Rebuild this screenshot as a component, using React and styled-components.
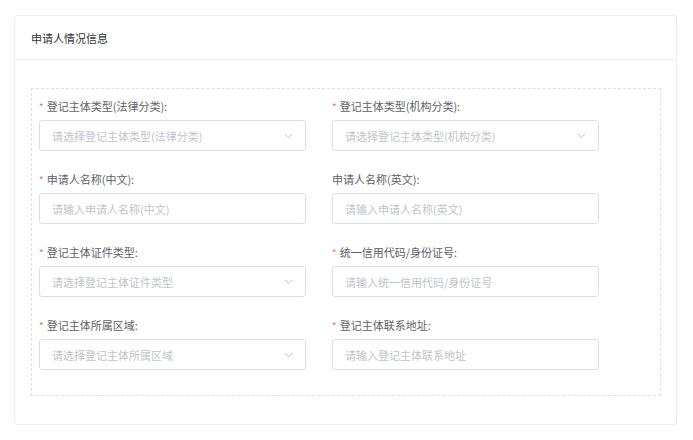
import React from 'react';
import styled, { createGlobalStyle } from 'styled-components';

const GlobalStyle = createGlobalStyle`
    body {
        margin: 0;
        background: #ffffff;
        font-family: "Noto Sans CJK SC", "Noto Sans", sans-serif;
    }
`;

const Page = styled.div`
    padding: 15px 16px 0 14px;
`;

const Card = styled.div`
    width: 663px;
    box-sizing: border-box;
    border: 1px solid #ebeef5;
    border-radius: 3px;
    background: #fff;
`;

const CardHeader = styled.div`
    height: 43px;
    display: flex;
    align-items: center;
    padding: 0 16px;
    border-bottom: 1px solid #ebeef5;
    font-size: 11px;
    color: #303133;
`;

const CardBody = styled.div`
    padding: 28px 15px 28px 16px;
`;

const DashedBox = styled.div`
    border: 1px dashed #dcdfe6;
    padding: 7px 7px 7px 7px;
    display: grid;
    grid-template-columns: 267px 267px;
    column-gap: 26px;
`;

const Field = styled.div`
    margin-bottom: 18px;
`;

const Label = styled.div`
    height: 20px;
    line-height: 20px;
    font-size: 11px;
    color: #606266;
    margin-bottom: 4px;
    white-space: nowrap;
    margin-left: ${p => (p.required ? '0' : '0')};
`;

const Star = styled.span`
    color: #f56c6c;
    margin-right: 3px;
    font-size: 10px;
`;

const InputBox = styled.div`
    height: 31px;
    box-sizing: border-box;
    border: 1px solid #dcdfe6;
    border-radius: 3px;
    display: flex;
    align-items: center;
    justify-content: space-between;
    padding: 0 12px 0 12px;
    font-size: 11px;
    color: #c0c4cc;
`;

const Chevron = () => (
    <svg width="9" height="6" viewBox="0 0 9 6" fill="none">
        <polyline points="1,1 4.5,4.5 8,1" stroke="#c0c4cc" strokeWidth="1" />
    </svg>
);

const fields = [
    { label: '登记主体类型(法律分类):', placeholder: '请选择登记主体类型(法律分类)', required: true, select: true },
    { label: '登记主体类型(机构分类):', placeholder: '请选择登记主体类型(机构分类)', required: true, select: true },
    { label: '申请人名称(中文):', placeholder: '请输入申请人名称(中文)', required: true },
    { label: '申请人名称(英文):', placeholder: '请输入申请人名称(英文)' },
    { label: '登记主体证件类型:', placeholder: '请选择登记主体证件类型', required: true, select: true },
    { label: '统一信用代码/身份证号:', placeholder: '请输入统一信用代码/身份证号', required: true },
    { label: '登记主体所属区域:', placeholder: '请选择登记主体所属区域', required: true, select: true },
    { label: '登记主体联系地址:', placeholder: '请输入登记主体联系地址', required: true },
];

const App = () => {
    return (
        <Page>
            <GlobalStyle />
            <Card>
                <CardHeader>申请人情况信息</CardHeader>
                <CardBody>
                    <DashedBox>
                        {fields.map(f => (
                            <Field key={f.label}>
                                <Label>
                                    {f.required && <Star>*</Star>}
                                    {f.label}
                                </Label>
                                <InputBox>
                                    <span>{f.placeholder}</span>
                                    {f.select && <Chevron />}
                                </InputBox>
                            </Field>
                        ))}
                    </DashedBox>
                </CardBody>
            </Card>
        </Page>
    );
};

export default App;
